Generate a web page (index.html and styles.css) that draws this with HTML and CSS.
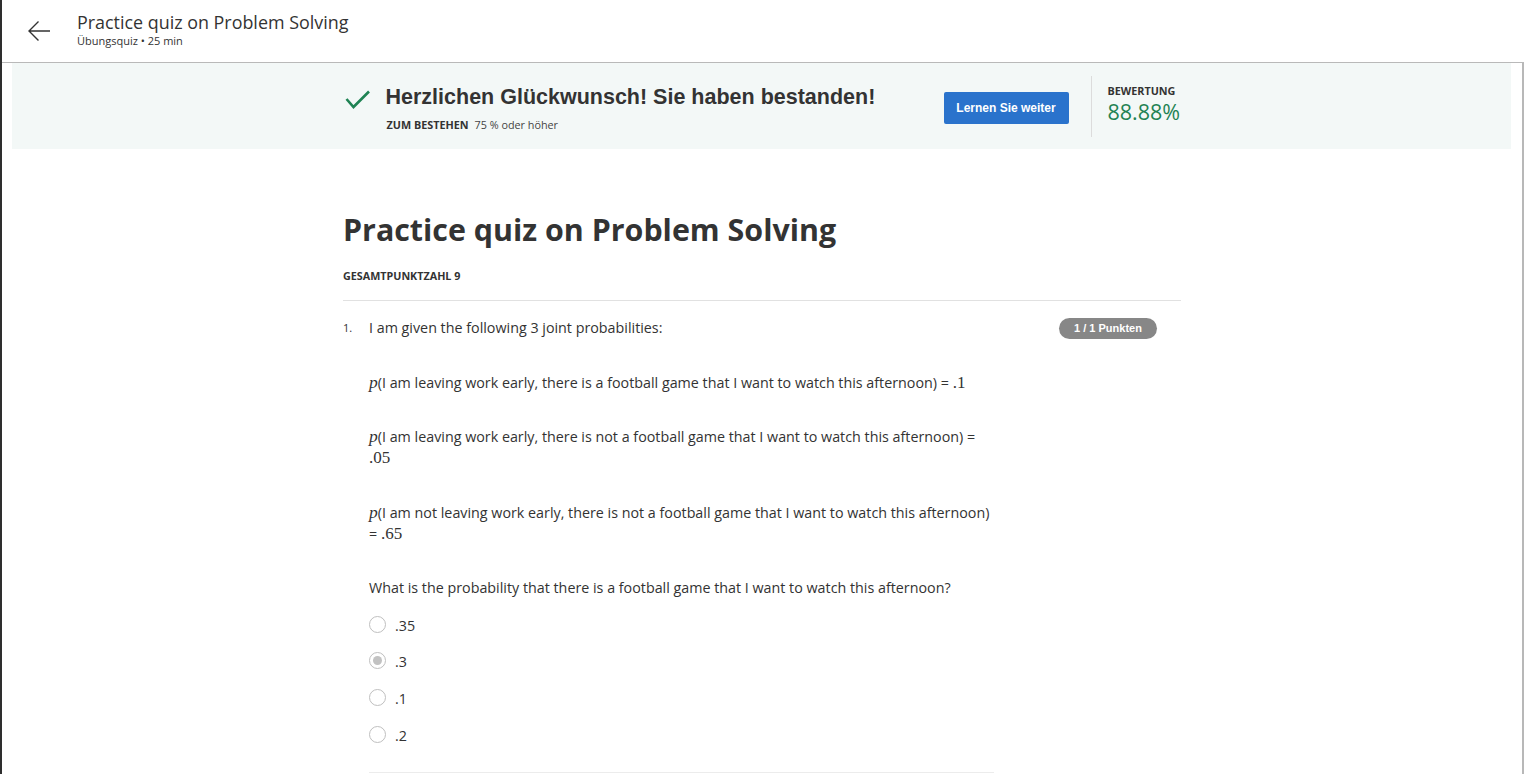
FILE: index.html
```html
<!DOCTYPE html>
<html lang="de">
<head>
<meta charset="utf-8">
<title>Practice quiz on Problem Solving</title>
<link rel="stylesheet" href="styles.css">
</head>
<body>
<div class="app">
  <header class="header">
    <button class="back" aria-label="Zurück">
      <svg width="24" height="22" viewBox="0 0 24 22"><path d="M23 11 H2 M11.5 1.5 L2 11 L11.5 20.5" fill="none" stroke="#333" stroke-width="1.4"/></svg>
    </button>
    <div class="head-text">
      <div class="head-title">Practice quiz on Problem Solving</div>
      <div class="head-sub">Übungsquiz • 25 min</div>
    </div>
  </header>
  <main class="main">
    <section class="banner">
      <div class="banner-inner">
        <svg class="check" width="26" height="20" viewBox="0 0 26 20"><path d="M1.5 9 L8.5 17 L24 1.5" fill="none" stroke="#1f8354" stroke-width="2.6"/></svg>
        <div class="banner-text">
          <div class="banner-title">Herzlichen Glückwunsch! Sie haben bestanden!</div>
          <div class="banner-pass"><span class="pass-label">ZUM BESTEHEN</span><span class="pass-value">75 % oder höher</span></div>
        </div>
        <button class="continue">Lernen Sie weiter</button>
        <div class="divider"></div>
        <div class="score">
          <div class="score-label">BEWERTUNG</div>
          <div class="score-value">88.88%</div>
        </div>
      </div>
    </section>
    <section class="content">
      <h1 class="quiz-title">Practice quiz on Problem Solving</h1>
      <div class="total">GESAMTPUNKTZAHL 9</div>
      <div class="rule"></div>
      <div class="question">
        <div class="qnum">1.</div>
        <div class="qbody">
          <p class="para">I am given the following 3 joint probabilities:</p>
          <p class="para"><span class="math-i">p</span>(I am leaving work early, there is a football game that I want to watch this afternoon) = <span class="math">.1</span></p>
          <p class="para"><span class="math-i">p</span>(I am leaving work early, there is not a football game that I want to watch this afternoon) = <span class="math">.05</span></p>
          <p class="para"><span class="math-i">p</span>(I am not leaving work early, there is not a football game that I want to watch this afternoon) = <span class="math">.65</span></p>
          <p class="para last">What is the probability that there is a football game that I want to watch this afternoon?</p>
          <div class="options">
            <div class="option"><span class="radio"></span><span class="opt-text">.35</span></div>
            <div class="option"><span class="radio checked"></span><span class="opt-text">.3</span></div>
            <div class="option"><span class="radio"></span><span class="opt-text">.1</span></div>
            <div class="option"><span class="radio"></span><span class="opt-text">.2</span></div>
          </div>
          <div class="feedback-line"></div>
        </div>
        <div class="badge">1 / 1 Punkten</div>
      </div>
    </section>
  </main>
</div>
</body>
</html>
```

FILE: styles.css
```css
* { box-sizing: border-box; }
html, body {
  margin: 0;
  padding: 0;
  height: 774px;
  overflow: hidden;
  background: #fff;
  font-family: "Open Sans", "Noto Sans", sans-serif;
  color: #333;
}
.app {
  border-left: 2px solid #2e2e2e;
  height: 774px;
  display: flex;
  flex-direction: column;
}
.header {
  height: 63px;
  flex: none;
  border-bottom: 1px solid #b9b9b9;
  display: flex;
  align-items: center;
  padding-left: 25px;
}
.back {
  border: 0;
  background: none;
  padding: 0;
  width: 24px;
  height: 22px;
  margin-top: -1px;
  display: flex;
}
.head-text {
  margin-left: 26px;
  margin-top: -5px;
}
.head-title {
  font-size: 17.9px;
  line-height: 24px;
  color: #333;
}
.head-sub {
  font-size: 11px;
  line-height: 14px;
  color: #333;
}
.main {
  flex: 1;
  border-right: 2px solid #b8b8b8;
  overflow: hidden;
}
.banner {
  background: #f3f8f7;
  margin: 0 11px 0 10px;
  height: 86px;
  display: flex;
  justify-content: center;
}
.banner-inner {
  width: 838px;
  display: flex;
  align-items: center;
}
.check {
  margin-left: 2px;
  margin-top: -12px;
  flex: none;
}
.banner-text {
  flex: 1;
  margin-left: 15px;
  margin-top: 3px;
}
.banner-title {
  font-family: "Liberation Sans", Arial, sans-serif;
  font-weight: bold;
  font-size: 21.5px;
  line-height: 26px;
  color: #333;
}
.banner-pass {
  margin-top: 8px;
  margin-left: 1px;
  font-size: 10.8px;
  line-height: 14px;
}
.pass-label {
  font-weight: bold;
  color: #333;
}
.pass-value {
  margin-left: 6px;
  color: #444;
}
.continue {
  flex: none;
  width: 125px;
  height: 32px;
  margin-top: 4px;
  border: 0;
  border-radius: 2px;
  background: #2a73cc;
  color: #fff;
  font-family: "Liberation Sans", Arial, sans-serif;
  font-weight: bold;
  font-size: 12px;
}
.divider {
  flex: none;
  width: 1px;
  height: 61px;
  background: #dcdcdc;
  margin: 0 16px 0 22px;
}
.score {
  flex: none;
  width: 73px;
  margin-top: -3px;
}
.score-label {
  font-size: 10.8px;
  font-weight: bold;
  line-height: 14px;
  color: #333;
}
.score-value {
  font-size: 21.5px;
  line-height: 27px;
  color: #1f8354;
}
.content {
  width: 838px;
  margin: 0 auto;
}
.quiz-title {
  margin: 61px 0 0;
  font-size: 30.4px;
  line-height: 40px;
  font-weight: bold;
  color: #333;
}
.total {
  margin-top: 19px;
  font-size: 10.75px;
  font-weight: bold;
  line-height: 14px;
  color: #333;
}
.rule {
  height: 1px;
  background: #e1e1e1;
  margin-top: 17px;
}
.question {
  display: flex;
  padding-top: 16px;
}
.qnum {
  flex: none;
  width: 26px;
  font-size: 11px;
  line-height: 21px;
}
.qbody {
  flex: none;
  width: 630px;
}
.para {
  margin: 0 0 33.5px;
  font-size: 14.3px;
  line-height: 21px;
  color: #333;
}
.para.last {
  margin-bottom: 8px;
}
.math-i {
  font-family: "Liberation Serif", "DejaVu Serif", serif;
  font-style: italic;
  font-size: 17.5px;
  line-height: 1;
}
.math {
  font-family: "Liberation Serif", "DejaVu Serif", serif;
  font-size: 17px;
  line-height: 1;
}
.option {
  display: flex;
  align-items: center;
  height: 36.67px;
}
.radio {
  flex: none;
  width: 17px;
  height: 17px;
  border: 1.5px solid #bfbfbf;
  border-radius: 50%;
  display: flex;
  align-items: center;
  justify-content: center;
}
.radio.checked::after {
  content: "";
  width: 9px;
  height: 9px;
  border-radius: 50%;
  background: #c2c2c2;
}
.opt-text {
  margin-left: 9px;
  font-size: 14.3px;
  line-height: 21px;
  margin-top: 2px;
}
.feedback-line {
  margin-top: 19px;
  height: 1px;
  width: 625px;
  background: #ececec;
}
.badge {
  flex: none;
  margin-left: auto;
  margin-right: 24px;
  margin-top: 1px;
  width: 98px;
  height: 21px;
  border-radius: 11px;
  background: #878787;
  color: #fff;
  font-family: "Liberation Sans", Arial, sans-serif;
  font-weight: bold;
  font-size: 11px;
  line-height: 21px;
  text-align: center;
}
```
